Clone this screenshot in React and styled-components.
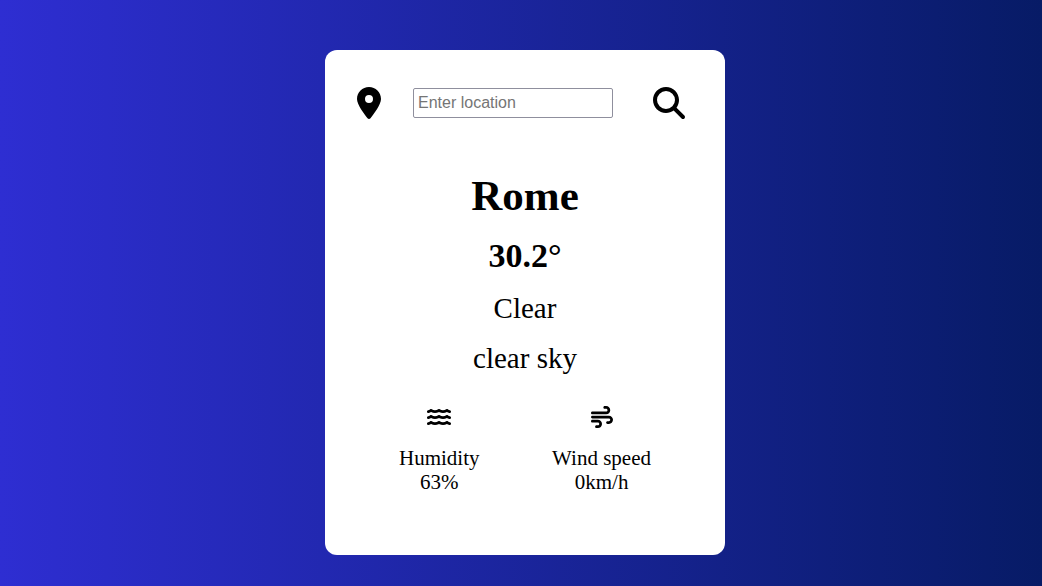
import React, { useState } from "react";
import styled, { createGlobalStyle } from "styled-components";
import { FaLocationDot, FaMagnifyingGlass, FaWater, FaWind } from "react-icons/fa6";

const GlobalStyle = createGlobalStyle`
  *, *::before, *::after {
    box-sizing: border-box;
  }
  body {
    margin: 0;
    color: #000;
    font-family: "Liberation Serif", "Times New Roman", serif;
  }
`;

const Page = styled.main`
  display: flex;
  justify-content: center;
  align-items: flex-start;
  min-height: 100vh;
  padding: 50px 0 30px 8px;
  background: linear-gradient(to right, #2e2ed2, #071b66);
`;

const Card = styled.section`
  width: 100%;
  max-width: 400px;
  padding: 37px 32px 61px;
  border-radius: 12px;
  background: #fff;
  text-align: center;
`;

const SearchBar = styled.form`
  display: flex;
  align-items: center;
  padding-right: 8px;
`;

const IconButton = styled.button`
  display: flex;
  padding: 0;
  border: 0;
  background: none;
  color: inherit;
  cursor: pointer;

  svg {
    width: ${({ $iconWidth }) => $iconWidth}px;
    height: 32px;
  }
`;

const LocationInput = styled.input`
  flex: 1;
  min-width: 0;
  height: 30px;
  margin: 0 40px 0 32px;
  padding: 0 4px;
  border: 1px solid #8f8f9d;
  border-radius: 2px;
  background: #fff;
  font: 16px "Liberation Sans", Arial, sans-serif;

  &::placeholder {
    color: #757575;
  }
`;

const City = styled.h1`
  margin: 52px 0 0;
  font-size: 43px;
  line-height: 50px;
`;

const Temperature = styled.h2`
  margin: 16px 0 0;
  font-size: 34px;
  line-height: 38px;
`;

const Condition = styled.p`
  margin: 16px 0 0;
  font-size: 29px;
  line-height: 34px;
`;

const Details = styled.div`
  display: flex;
  justify-content: space-between;
  padding: 31px 42px 0;
`;

const Detail = styled.div`
  display: flex;
  flex-direction: column;
  align-items: center;
  font-size: 21px;
  line-height: 24px;

  svg {
    width: ${({ $iconWidth }) => $iconWidth}px;
    height: 22px;
    margin-bottom: 18px;
  }
`;

export default function App() {
  const [location, setLocation] = useState("");

  return (
    <>
      <GlobalStyle />
      <Page>
        <Card>
          <SearchBar onSubmit={(event) => event.preventDefault()}>
            <IconButton type="button" $iconWidth={24} aria-label="Use current location">
              <FaLocationDot />
            </IconButton>
            <LocationInput
              type="text"
              aria-label="Location"
              placeholder="Enter location"
              value={location}
              onChange={(event) => setLocation(event.target.value)}
            />
            <IconButton type="submit" $iconWidth={32} aria-label="Search">
              <FaMagnifyingGlass />
            </IconButton>
          </SearchBar>
          <City>Rome</City>
          <Temperature>30.2°</Temperature>
          <Condition>Clear</Condition>
          <Condition>clear sky</Condition>
          <Details>
            <Detail $iconWidth={24}>
              <FaWater aria-hidden="true" />
              <span>Humidity</span>
              <span>63%</span>
            </Detail>
            <Detail $iconWidth={22}>
              <FaWind aria-hidden="true" />
              <span>Wind speed</span>
              <span>0km/h</span>
            </Detail>
          </Details>
        </Card>
      </Page>
    </>
  );
}
